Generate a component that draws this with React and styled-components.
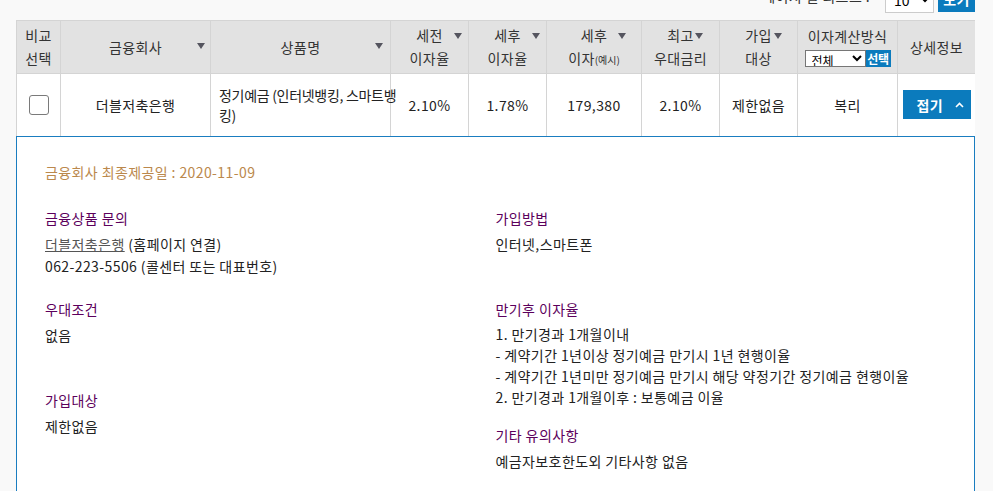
import React from 'react';
import styled, { createGlobalStyle } from 'styled-components';

const Global = createGlobalStyle`
  html, body { margin: 0; padding: 0; background: #f9f9f9; }
  body {
    font-family: "Noto Sans CJK KR", "Noto Sans", sans-serif;
    font-size: 14px;
    color: #333;
    letter-spacing: 0.4px;
  }
`;

const Page = styled.div`
  width: 959px;
  height: 491px;
  margin-left: 16px;
  overflow: hidden;
`;

const Toolbar = styled.div`
  height: 13px;
  overflow: hidden;
  display: flex;
  justify-content: flex-end;
  align-items: flex-end;
  gap: 4px;
`;

const ToolbarLabel = styled.span`
  line-height: 20px;
  padding-bottom: 7px;
  margin-right: 11px;
  color: #333;
`;

const PageSizeSelect = styled.select`
  width: 49px;
  height: 27px;
  border: 1px solid #ccc;
  background: #fff;
  font-family: inherit;
  font-size: 14px;
  padding: 0 4px;
`;

const BlueButton = styled.button`
  border: 0;
  background: #0b7bbd;
  color: #fff;
  font-family: inherit;
  font-weight: 700;
  letter-spacing: inherit;
  cursor: pointer;
`;

const ViewButton = styled(BlueButton)`
  width: 37px;
  height: 27px;
  margin-bottom: 1px;
  font-size: 14px;
  padding: 0;
`;

const Table = styled.table`
  width: 959px;
  margin-top: 7px;
  border-collapse: collapse;
  table-layout: fixed;
  background: #fff;
`;

const HeadRow = styled.tr`
  height: 53px;
`;

const BodyRow = styled.tr`
  height: 62px;
`;

const Th = styled.th`
  position: relative;
  padding: 0;
  background: #e2e2e2;
  border: 1px solid #d4d4d4;
  font-weight: 400;
  font-size: 14px;
  line-height: 23px;
  color: #333;
  text-align: center;
  vertical-align: middle;
`;

const SortArrow = styled.span`
  position: absolute;
  right: ${p => p.$right}px;
  top: ${p => p.$top}px;
  width: 0;
  height: 0;
  border-left: 4px solid transparent;
  border-right: 4px solid transparent;
  border-top: 6px solid #55555f;
`;

const Small = styled.span`
  font-size: 10px;
  letter-spacing: 0;
`;

const MethodBox = styled.div`
  display: flex;
  flex-direction: column;
  align-items: center;
  gap: 2px;
  padding-bottom: 2px;
`;

const MethodControls = styled.div`
  display: flex;
  align-items: center;
  height: 17px;
`;

const MethodSelect = styled.select`
  width: 61px;
  height: 17px;
  padding: 0 0 0 2px;
  border: 1px solid #767676;
  border-radius: 0;
  background: #fff;
  font-family: inherit;
  font-size: 12px;
  letter-spacing: 0;
`;

const ChooseButton = styled(BlueButton)`
  height: 17px;
  width: 25px;
  padding: 0;
  font-size: 12px;
  line-height: 17px;
  letter-spacing: -0.4px;
`;

const Td = styled.td`
  padding: ${p => (p.$left ? '0 0 0 8px' : '0')};
  border: 1px solid #d4d4d4;
  border-bottom: 0;
  text-align: ${p => (p.$left ? 'left' : 'center')};
  vertical-align: middle;
  font-size: 14px;
  line-height: 20px;
  letter-spacing: ${p => (p.$left ? '-0.3px' : 'inherit')};
  color: #222;
  white-space: nowrap;
`;

const Check = styled.input`
  appearance: none;
  display: block;
  margin: 0 auto;
  width: 20px;
  height: 20px;
  border: 1px solid #7a7a7a;
  border-radius: 3px;
  background: #fff;
`;

const ToggleButton = styled(BlueButton)`
  width: 68px;
  height: 29px;
  padding: 0 7px 0 14px;
  display: inline-flex;
  align-items: center;
  justify-content: space-between;
  font-size: 14px;
  vertical-align: middle;
`;

const Panel = styled.div`
  border: 1px solid #1a7dc0;
  background: #fff;
  padding: 24px 28px 40px;
`;

const UpdateDate = styled.p`
  margin: 0 0 24px;
  line-height: 22px;
  color: #bb884c;
`;

const Columns = styled.div`
  display: grid;
  grid-template-columns: 1fr 1fr;
`;

const Column = styled.div``;

const Section = styled.dl`
  margin: 0 0 15px;
  min-height: 76px;
`;

const Heading = styled.dt`
  margin-bottom: 4px;
  line-height: 22px;
  color: #5c005c;
`;

const Detail = styled.dd`
  margin: 0;
  line-height: ${p => (p.$tight ? '21.3px' : '22px')};
  color: #222;
`;

const Link = styled.a`
  color: #555;
  text-decoration: underline;
`;

const Chevron = () => (
  <svg width="9" height="6" viewBox="0 0 9 6" aria-hidden="true">
    <polyline points="1,5 4.5,1.5 8,5" fill="none" stroke="#fff" strokeWidth="1.6" />
  </svg>
);

const cols = [44, 150, 180, 78, 78, 95, 78, 78, 100, 78];

export default function App() {
  return (
    <>
      <Global />
      <Page>
        <Toolbar>
          <ToolbarLabel>페이지 별 리스트 :</ToolbarLabel>
          <PageSizeSelect defaultValue="10">
            <option value="10">10</option>
            <option value="20">20</option>
          </PageSizeSelect>
          <ViewButton>보기</ViewButton>
        </Toolbar>

        <Table>
          <colgroup>
            {cols.map((w, i) => (
              <col key={i} style={{ width: w }} />
            ))}
          </colgroup>
          <thead>
            <HeadRow>
              <Th>비교<br />선택</Th>
              <Th>금융회사<SortArrow $right={5} $top={22} /></Th>
              <Th>상품명<SortArrow $right={7} $top={22} /></Th>
              <Th>세전<br />이자율<SortArrow $right={6} $top={12} /></Th>
              <Th>세후<br />이자율<SortArrow $right={6} $top={12} /></Th>
              <Th>세후<br />이자<Small>(예시)</Small><SortArrow $right={15} $top={12} /></Th>
              <Th>최고<br />우대금리<SortArrow $right={16} $top={12} /></Th>
              <Th>가입<br />대상<SortArrow $right={15} $top={12} /></Th>
              <Th>
                <MethodBox>
                  <span>이자계산방식</span>
                  <MethodControls>
                    <MethodSelect defaultValue="all">
                      <option value="all">전체</option>
                      <option value="simple">단리</option>
                      <option value="compound">복리</option>
                    </MethodSelect>
                    <ChooseButton>선택</ChooseButton>
                  </MethodControls>
                </MethodBox>
              </Th>
              <Th>상세정보</Th>
            </HeadRow>
          </thead>
          <tbody>
            <BodyRow>
              <Td><Check type="checkbox" /></Td>
              <Td>더블저축은행</Td>
              <Td $left>정기예금 (인터넷뱅킹, 스마트뱅<br />킹)</Td>
              <Td>2.10%</Td>
              <Td>1.78%</Td>
              <Td>179,380</Td>
              <Td>2.10%</Td>
              <Td>제한없음</Td>
              <Td>복리</Td>
              <Td>
                <ToggleButton>
                  <span>접기</span>
                  <Chevron />
                </ToggleButton>
              </Td>
            </BodyRow>
          </tbody>
        </Table>

        <Panel>
          <UpdateDate>금융회사 최종제공일 : 2020-11-09</UpdateDate>
          <Columns>
            <Column>
              <Section>
                <Heading>금융상품 문의</Heading>
                <Detail><Link href="#">더블저축은행</Link> (홈페이지 연결)</Detail>
                <Detail>062-223-5506 (콜센터 또는 대표번호)</Detail>
              </Section>
              <Section>
                <Heading>우대조건</Heading>
                <Detail>없음</Detail>
              </Section>
              <Section>
                <Heading>가입대상</Heading>
                <Detail>제한없음</Detail>
              </Section>
            </Column>
            <Column>
              <Section>
                <Heading>가입방법</Heading>
                <Detail>인터넷,스마트폰</Detail>
              </Section>
              <Section>
                <Heading>만기후 이자율</Heading>
                <Detail $tight>1. 만기경과 1개월이내</Detail>
                <Detail $tight>- 계약기간 1년이상 정기예금 만기시 1년 현행이율</Detail>
                <Detail $tight>- 계약기간 1년미만 정기예금 만기시 해당 약정기간 정기예금 현행이율</Detail>
                <Detail $tight>2. 만기경과 1개월이후 : 보통예금 이율</Detail>
              </Section>
              <Section>
                <Heading>기타 유의사항</Heading>
                <Detail>예금자보호한도외 기타사항 없음</Detail>
              </Section>
            </Column>
          </Columns>
        </Panel>
      </Page>
    </>
  );
}
